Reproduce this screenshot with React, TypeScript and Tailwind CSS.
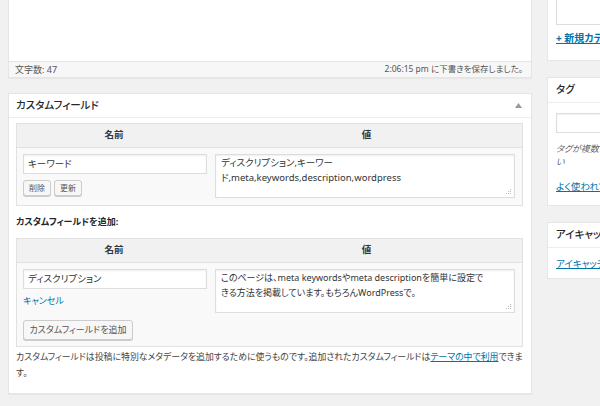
import React from "react";

const font = { fontFamily: '"Noto Sans","Noto Sans CJK JP",sans-serif' };

function Grip() {
  return (
    <svg className="absolute right-[2px] bottom-[2px]" width="6" height="6" viewBox="0 0 6 6">
      <rect x="4" y="0" width="1" height="1" fill="#bbb" />
      <rect x="2" y="2" width="1" height="1" fill="#bbb" />
      <rect x="4" y="2" width="1" height="1" fill="#bbb" />
      <rect x="0" y="4" width="1" height="1" fill="#bbb" />
      <rect x="2" y="4" width="1" height="1" fill="#bbb" />
      <rect x="4" y="4" width="1" height="1" fill="#bbb" />
    </svg>
  );
}

function Btn({ children, className = "" }: { children: React.ReactNode; className?: string }) {
  return (
    <div
      className={
        "flex items-center justify-center border border-[#ccc] bg-[#f7f7f7] rounded-[3px] shadow-[0_1px_0_#ccc] text-[#555] whitespace-nowrap " +
        className
      }
    >
      {children}
    </div>
  );
}

function Input({ value, className = "" }: { value?: string; className?: string }) {
  return (
    <div
      className={
        "flex items-center border border-[#ddd] bg-white shadow-[inset_0_1px_2px_rgba(0,0,0,0.07)] px-[4px] text-[9.5px] text-[#333] whitespace-nowrap " +
        className
      }
    >
      {value}
    </div>
  );
}

function TableHead() {
  return (
    <div className="flex h-[24px] bg-[#f1f1f1] border-b border-[#e1e1e1] text-[9.5px] font-bold text-[#32373c] items-center">
      <div className="w-[194px] text-center">名前</div>
      <div className="flex-1 text-center">値</div>
    </div>
  );
}

export default function App() {
  return (
    <div
      className="w-[600px] h-[406px] bg-[#f1f1f1] overflow-hidden flex text-[#444] [font-feature-settings:'palt']"
      style={font}
    >
      {/* main column */}
      <div className="ml-[8px] w-[524px] shrink-0 flex flex-col">
        {/* editor */}
        <div className="bg-white border-x border-b border-[#e5e5e5] shadow-[0_1px_1px_rgba(0,0,0,0.04)]">
          <div className="h-[61px]" />
          <div className="h-[16px] bg-[#f7f7f7] border-t border-[#e5e5e5] flex items-center justify-between pl-[6px] pr-[8px] text-[8.5px] text-[#555] whitespace-nowrap">
            <span className="text-[9px]">文字数: 47</span>
            <span>2:06:15 pm に下書きを保存しました。</span>
          </div>
        </div>

        {/* custom fields box */}
        <div className="mt-[15px] bg-white border border-[#e5e5e5] shadow-[0_1px_1px_rgba(0,0,0,0.04)] flex flex-col">
          <div className="h-[24px] border-b border-[#eee] flex items-center justify-between pl-[7px] pr-[9px]">
            <span className="text-[10.5px] font-medium text-[#23282d]">カスタムフィールド</span>
            <svg width="7" height="5" viewBox="0 0 7 5">
              <path d="M0 5 L3.5 0 L7 5 Z" fill="#999" />
            </svg>
          </div>

          <div className="pl-[7px] pr-[8px] pt-[5px]">
            {/* table 1 */}
            <div className="border border-[#e1e1e1] bg-[#f9f9f9]">
              <TableHead />
              <div className="flex h-[57px] pt-[6px]">
                <div className="w-[198px] pl-[6px] flex flex-col">
                  <Input value="キーワード" className="w-[184px] h-[20px]" />
                  <div className="flex gap-[3px] mt-[6px]">
                    <Btn className="w-[28px] h-[16px] text-[8px]">削除</Btn>
                    <Btn className="w-[28px] h-[16px] text-[8px]">更新</Btn>
                  </div>
                </div>
                <div className="relative w-[300px] h-[44px] border border-[#ddd] bg-white shadow-[inset_0_1px_2px_rgba(0,0,0,0.07)] px-[5px] text-[9.5px] leading-[15px] text-[#333] whitespace-nowrap">
                  ディスクリプション,キーワー
                  <br />
                  ド,meta,keywords,description,wordpress
                  <Grip />
                </div>
              </div>
            </div>

            <div className="h-[32px] flex items-center text-[9px] font-bold text-[#23282d]">
              カスタムフィールドを追加:
            </div>

            {/* table 2 */}
            <div className="border border-[#e1e1e1] bg-[#f9f9f9]">
              <TableHead />
              <div className="flex h-[83px] pt-[6px]">
                <div className="w-[198px] pl-[6px] flex flex-col">
                  <Input value="ディスクリプション" className="w-[184px] h-[20px]" />
                  <span className="mt-[4px] text-[9px] leading-[16px] text-[#0073aa]">キャンセル</span>
                  <Btn className="mt-[11px] w-[110px] h-[20px] text-[9px]">カスタムフィールドを追加</Btn>
                </div>
                <div className="relative w-[300px] h-[44px] border border-[#ddd] bg-white shadow-[inset_0_1px_2px_rgba(0,0,0,0.07)] px-[5px] text-[9px] leading-[15px] text-[#333] whitespace-nowrap">
                  このページは、meta keywordsやmeta descriptionを簡単に設定で
                  <br />
                  きる方法を掲載しています。もちろんWordPressで。
                  <Grip />
                </div>
              </div>
            </div>

            <div className="pt-[2px] pb-[12px] text-[8.9px] leading-[16px] text-[#444] whitespace-nowrap">
              カスタムフィールドは投稿に特別なメタデータを追加するために使うものです。追加されたカスタムフィールドは
              <span className="text-[#0073aa] underline">テーマの中で利用</span>
              できま
              <br />
              す。
            </div>
          </div>
        </div>
      </div>

      {/* sidebar */}
      <div className="ml-[15px] w-[280px] shrink-0 flex flex-col">
        <div className="h-[61px] bg-white border-x border-b border-[#e5e5e5] px-[8px]">
          <div className="h-[25px] border-x border-b border-[#ddd] bg-white" />
          <div className="mt-[6px] text-[10px] font-bold leading-[14px] text-[#0073aa] underline whitespace-nowrap">+ 新規カテゴリーを追加</div>
        </div>

        <div className="mt-[16px] h-[129px] bg-white border border-[#e5e5e5]">
          <div className="h-[25px] border-b border-[#eee] flex items-center pl-[8px] text-[10.5px] font-medium text-[#23282d]">
            タグ
          </div>
          <div className="px-[8px] pt-[10px]">
            <Input className="w-[200px] h-[20px]" />
            <div className="mt-[9px] text-[9px] italic leading-[13px] text-[#666] whitespace-nowrap">
              タグが複数ある場合はコンマで区切ってくださ
              <br />
              い
            </div>
            <div className="mt-[12px] text-[9.5px] leading-[14px] text-[#0073aa] underline whitespace-nowrap">よく使われているタグから選択</div>
          </div>
        </div>

        <div className="mt-[16px] h-[57px] bg-white border border-[#e5e5e5]">
          <div className="h-[25px] border-b border-[#eee] flex items-center pl-[8px] text-[10.5px] font-medium text-[#23282d] whitespace-nowrap">
            アイキャッチ画像
          </div>
          <div className="px-[8px] pt-[9px] text-[9.5px] leading-[14px] text-[#0073aa] underline whitespace-nowrap">アイキャッチ画像を設定</div>
        </div>
      </div>
    </div>
  );
}
